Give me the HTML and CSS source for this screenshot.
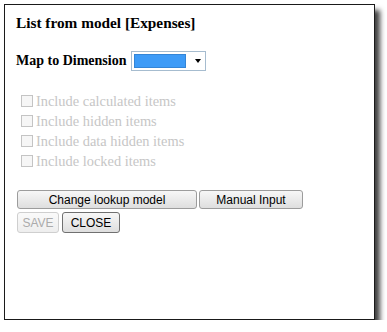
FILE: index.html
```html
<!DOCTYPE html>
<html lang="en">
<head>
    <meta charset="UTF-8">
    <title>List from model</title>
    <link rel="stylesheet" href="styles.css">
</head>
<body>
    <div class="dialog">
        <h1 class="titulo">List from model [Expenses]</h1>

        <div class="mapeo">
            <span class="etiqueta">Map to Dimension</span>
            <div class="combo">
                <span class="combo-valor"></span>
                <span class="combo-flecha"></span>
            </div>
        </div>

        <!-- opciones deshabilitadas -->
        <div class="opciones">
            <div class="opcion"><span class="caja"></span>Include calculated items</div>
            <div class="opcion"><span class="caja"></span>Include hidden items</div>
            <div class="opcion"><span class="caja"></span>Include data hidden items</div>
            <div class="opcion"><span class="caja"></span>Include locked items</div>
        </div>

        <div class="botones">
            <div class="fila">
                <button class="boton ancho-lookup">Change lookup model</button>
                <button class="boton ancho-manual">Manual Input</button>
            </div>
            <div class="fila">
                <button class="boton ancho-save" disabled>SAVE</button>
                <button class="boton ancho-close foco">CLOSE</button>
            </div>
        </div>
    </div>
</body>
</html>
```

FILE: styles.css
```css
body {
    margin: 0;
    background: #fff;
    font-family: "Liberation Serif", "Times New Roman", serif;
}

.dialog {
    box-sizing: border-box;
    width: 371px;
    height: 316px;
    margin: 4px 0 0 4px;
    padding: 9px 11px 7px;
    border: 1px solid #1a1a1a;
    background: #fff;
    box-shadow: 5px 6px 5px rgba(0, 0, 0, 0.75);
}

.titulo {
    margin: 0;
    font-size: 15.3px;
    line-height: 18px;
    font-weight: bold;
    color: #000;
}

.mapeo {
    display: flex;
    align-items: center;
    height: 20px;
    margin-top: 19px;
}

.etiqueta {
    font-size: 14px;
    font-weight: bold;
    color: #000;
}

.combo {
    box-sizing: border-box;
    display: flex;
    align-items: center;
    width: 75px;
    height: 20px;
    margin-left: 5px;
    padding-left: 2px;
    border: 1px solid #a6bccf;
    background: #fff;
}

.combo-valor {
    box-sizing: border-box;
    width: 52px;
    height: 14px;
    background: #3d9bf7;
    border: 1px solid #3485d6;
}

.combo-flecha {
    width: 0;
    height: 0;
    margin-left: 9px;
    border-left: 3.5px solid transparent;
    border-right: 3.5px solid transparent;
    border-top: 4px solid #000;
}

.opciones {
    margin-top: 20px;
}

.opcion {
    display: flex;
    align-items: center;
    height: 20px;
    font-size: 14.4px;
    color: #c6c6c6;
}

.caja {
    box-sizing: border-box;
    width: 12px;
    height: 12px;
    margin: 0 3px 0 5px;
    border: 1px solid #c4c4c4;
    background: #f6f6f6;
}

.botones {
    margin-top: 19px;
    margin-left: 1px;
}

.fila {
    display: flex;
    gap: 2px;
    margin-bottom: 3px;
}

.boton {
    box-sizing: border-box;
    height: 19px;
    padding: 0;
    border: 1px solid #9c9c9c;
    border-radius: 3px;
    background: linear-gradient(#f7f7f7, #dedede);
    font-family: "Liberation Sans", Arial, sans-serif;
    font-size: 12px;
    color: #000;
}

.boton:disabled {
    color: #ababab;
    border-color: #cfcfcf;
    background: linear-gradient(#fafafa, #eeeeee);
}

.foco {
    border-color: #707070;
    margin-left: 1px;
}

.ancho-lookup { width: 180px; }
.ancho-manual { width: 104px; }
.ancho-save { width: 42px; height: 21px; }
.ancho-close { width: 58px; height: 21px; }
```
